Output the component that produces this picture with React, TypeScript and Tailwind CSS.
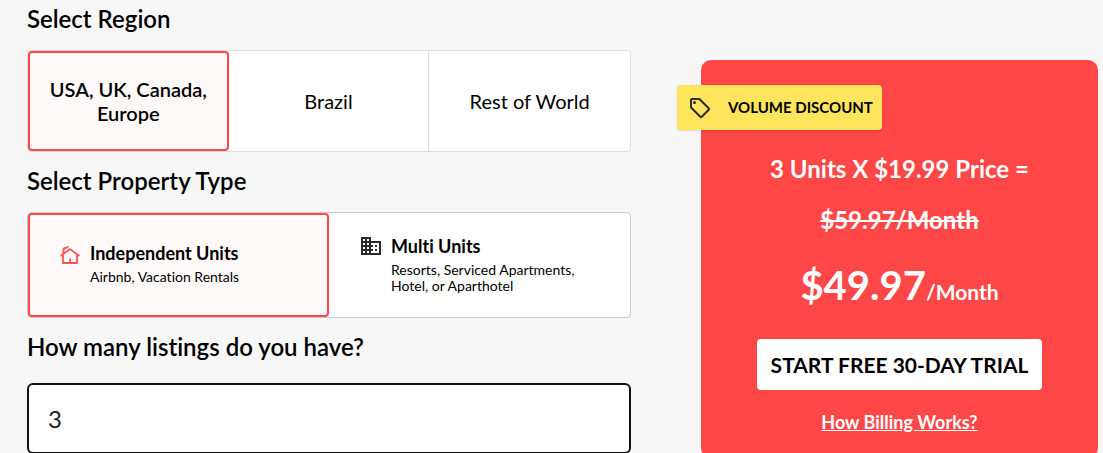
import { useState } from "react";

const regions = ["USA, UK, Canada, Europe", "Brazil", "Rest of World"];

function HouseIcon() {
  return (
    <svg viewBox="0 0 20 20" className="mt-1 h-5 w-5 shrink-0" fill="none" stroke="#f95555" strokeWidth="1.8" aria-hidden="true">
      <path d="M.6 11 10 4l9.400 7M3 10v8h14v-8M10 18v-4.500M3.400 8.500V5M3.400 5.500C3.400 3.800 4 3 5.400 3S7.600 2.600 8 1.200" />
    </svg>
  );
}

function BuildingIcon() {
  return (
    <svg viewBox="0 0 24 24" className="h-6 w-6 shrink-0" fill="#2b2b2b" aria-hidden="true">
      <path d="M12 7V3H2v18h20V7H12zM6 19H4v-2h2v2zm0-4H4v-2h2v2zm0-4H4V9h2v2zm0-4H4V5h2v2zm4 12H8v-2h2v2zm0-4H8v-2h2v2zm0-4H8V9h2v2zm0-4H8V5h2v2zm10 12h-8v-2h2v-2h-2v-2h2v-2h-2V9h8v10zm-2-8h-2v2h2v-2zm0 4h-2v2h2v-2z" />
    </svg>
  );
}

function TagIcon() {
  return (
    <svg viewBox="0 0 24 24" className="h-6 w-6 shrink-0" fill="#2b2b2b" aria-hidden="true">
      <path d="M21.41 11.58l-9-9C12.05 2.22 11.55 2 11 2H4c-1.1 0-2 .9-2 2v7c0 .55.22 1.05.59 1.42l9 9c.36.36.86.58 1.41.58s1.05-.22 1.41-.59l7-7c.37-.36.59-.86.59-1.41s-.23-1.06-.59-1.42zM13 20.01L4 11V4h7v-.01l9 9-7 7.02z" />
      <circle cx="6.5" cy="6.5" r="1.5" />
    </svg>
  );
}

export default function App() {
  const [region, setRegion] = useState(0);
  const [property, setProperty] = useState(0);
  return (
    <main className="flex min-h-screen items-start gap-[70px] bg-[#f7f7f7] pl-[27px] pr-[5px] font-[Lato,sans-serif] text-black [font-variant-ligatures:none]">
      <div className="min-w-0 flex-[604]">
        <h2 className="pt-1 text-2xl leading-[30px] font-semibold">Select Region</h2>
        <div className="mt-4 grid h-[102px] grid-cols-3 rounded border border-[#ddd] bg-white">
          {regions.map((name, i) => (
            <button key={name} type="button" aria-pressed={region === i} onClick={() => setRegion(i)}
              className={region === i ? "rounded border-2 border-[#ff4747] bg-[#fff9f9] px-3 text-xl leading-6 font-semibold" : "border-r border-[#ddd] px-3 text-xl leading-6 last:border-r-0"}>
              {name}
            </button>
          ))}
        </div>
        <h2 className="mt-[14px] text-2xl leading-[30px] font-semibold">Select Property Type</h2>
        <div className="mt-4 grid h-[106px] grid-cols-2 rounded border border-[#ccc] bg-white">
          <button type="button" aria-pressed={property === 0} onClick={() => setProperty(0)}
            className={property === 0 ? "flex items-start gap-2.5 rounded border-2 border-[#ff4747] bg-[#fff9f9] px-[30px] pt-[26px] text-left" : "flex items-start gap-2.5 px-8 pt-7 text-left"}>
            <HouseIcon />
            <span>
              <span className="block text-lg leading-6 font-bold">Independent Units</span>
              <span className="mt-1 block text-sm leading-4">Airbnb, Vacation Rentals</span>
            </span>
          </button>
          <button type="button" aria-pressed={property === 1} onClick={() => setProperty(1)}
            className={property === 1 ? "flex items-start gap-2 rounded border-2 border-[#ff4747] bg-[#fff9f9] px-7 pt-[19px] text-left" : "flex items-start gap-2 px-[30px] pt-[21px] text-left"}>
            <BuildingIcon />
            <span>
              <span className="block text-lg leading-6 font-bold">Multi Units</span>
              <span className="mt-1 block text-sm leading-4">Resorts, Serviced Apartments, Hotel, or Aparthotel</span>
            </span>
          </button>
        </div>
        <label htmlFor="listings" className="mt-[14px] block text-2xl leading-[30px] font-semibold">How many listings do you have?</label>
        <input id="listings" type="text" inputMode="numeric" defaultValue="3" className="mt-[21px] block h-[71px] w-full rounded-md border-2 border-[#111] bg-white px-[19px] text-2xl text-[#222] outline-none" />
      </div>
      <aside className="relative mt-[60px] flex min-w-0 flex-[397] flex-col items-center rounded-[10px] bg-[#ff4747] pb-6 text-center font-bold text-white">
        <div className="absolute top-[25px] -left-6 flex h-[45px] w-[205px] items-center gap-4 rounded bg-[#ffe55c] pl-[11px] text-[15px] text-black shadow">
          <TagIcon />
          <span className="whitespace-nowrap">VOLUME DISCOUNT</span>
        </div>
        <p className="pt-[94px] text-2xl leading-[30px]">3 Units X $19.99 Price =</p>
        <p className="mt-[21px] text-2xl leading-[30px] line-through">$59.97/Month</p>
        <p className="mt-[25px] text-[40px] leading-[50px]">$49.97<span className="text-[21px] leading-none">/Month</span></p>
        <button type="button" className="mt-[29px] h-[51px] w-[285px] rounded bg-white text-[21px] text-black">START FREE 30-DAY TRIAL</button>
        <a href="#billing" className="mt-5 text-lg leading-6 underline">How Billing Works?</a>
      </aside>
    </main>
  );
}
